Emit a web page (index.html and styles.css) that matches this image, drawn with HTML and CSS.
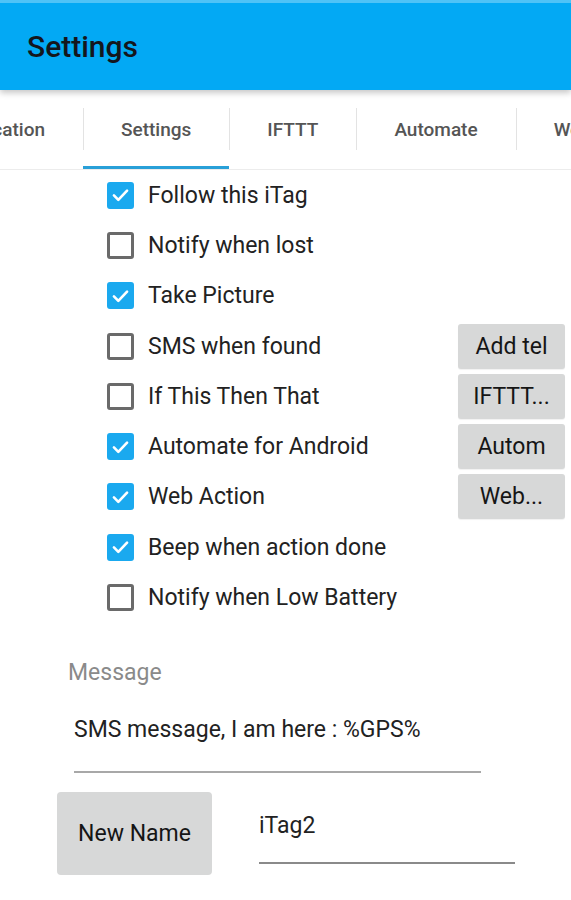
FILE: index.html
```html
<!DOCTYPE html>
<html lang="en">
<head>
<meta charset="utf-8">
<title>Settings</title>
<link rel="stylesheet" href="styles.css">
</head>
<body>
<header class="appbar">
  <h1 class="appbar-title">Settings</h1>
</header>
<nav class="tabbar">
  <div class="tab-clip"><div class="tab">Notification</div></div>
  <div class="tab active">Settings</div>
  <div class="tab">IFTTT</div>
  <div class="tab">Automate</div>
  <div class="tab">Web</div>
</nav>
<main class="content">
  <ul class="options">
    <li class="option"><span class="check on"><svg viewBox="0 0 24 24"><path d="M4.5 12.5l5 5L19.5 7"/></svg></span><span class="label">Follow this iTag</span></li>
    <li class="option"><span class="check"></span><span class="label">Notify when lost</span></li>
    <li class="option"><span class="check on"><svg viewBox="0 0 24 24"><path d="M4.5 12.5l5 5L19.5 7"/></svg></span><span class="label">Take Picture</span></li>
    <li class="option"><span class="check"></span><span class="label">SMS when found</span><button class="side-btn">Add tel</button></li>
    <li class="option"><span class="check"></span><span class="label">If This Then That</span><button class="side-btn">IFTTT...</button></li>
    <li class="option"><span class="check on"><svg viewBox="0 0 24 24"><path d="M4.5 12.5l5 5L19.5 7"/></svg></span><span class="label">Automate for Android</span><button class="side-btn">Autom</button></li>
    <li class="option"><span class="check on"><svg viewBox="0 0 24 24"><path d="M4.5 12.5l5 5L19.5 7"/></svg></span><span class="label">Web Action</span><button class="side-btn">Web...</button></li>
    <li class="option"><span class="check on"><svg viewBox="0 0 24 24"><path d="M4.5 12.5l5 5L19.5 7"/></svg></span><span class="label">Beep when action done</span></li>
    <li class="option"><span class="check"></span><span class="label">Notify when Low Battery</span></li>
  </ul>
  <section class="message">
    <div class="message-label">Message</div>
    <div class="message-field">SMS message, I am here : %GPS%</div>
  </section>
  <section class="rename">
    <button class="rename-btn">New Name</button>
    <div class="rename-field">iTag2</div>
  </section>
</main>
</body>
</html>
```
FILE: styles.css
```css
* { box-sizing: border-box; }
html, body { margin: 0; padding: 0; }
body {
  width: 571px;
  height: 900px;
  overflow: hidden;
  background: #fff;
  font-family: Roboto, "Liberation Sans", Arial, sans-serif;
  color: #222;
}
.appbar {
  height: 90px;
  background: #03a9f4;
  border-top: 3px solid #4fc3f7;
  display: flex;
  align-items: center;
  padding-left: 27px;
  box-shadow: 0 3px 6px rgba(0,0,0,0.22);
  position: relative;
  z-index: 2;
}
.appbar-title {
  margin: 0;
  font-size: 30px;
  font-weight: 500;
  color: #14161c;
}
.tabbar {
  height: 80px;
  display: flex;
  overflow: hidden;
  border-bottom: 1px solid #ececec;
  background: #fff;
}
.tab-clip {
  width: 83px;
  flex-shrink: 0;
  display: flex;
  justify-content: flex-end;
  overflow: hidden;
}
.tab {
  flex-shrink: 0;
  height: 79px;
  padding: 0 38px;
  display: flex;
  align-items: center;
  justify-content: center;
  font-size: 19px;
  font-weight: 500;
  color: #555;
  position: relative;
}
.tab::before {
  content: "";
  position: absolute;
  left: 0;
  top: 18px;
  height: 42px;
  width: 1px;
  background: #e3e3e3;
}
.tab-clip .tab::before { display: none; }
.tab.active::after {
  content: "";
  position: absolute;
  left: 0;
  right: 0;
  bottom: 0;
  height: 3px;
  background: #29a0d8;
}
.content { display: flex; flex-direction: column; }
.options {
  list-style: none;
  margin: 0;
  padding: 0;
}
.option {
  height: 50.3px;
  display: flex;
  align-items: center;
  padding-left: 107px;
  padding-right: 6px;
}
.check {
  width: 27px;
  height: 27px;
  border: 3px solid #6a6a6a;
  border-radius: 3px;
  flex-shrink: 0;
  display: flex;
  align-items: center;
  justify-content: center;
}
.check.on {
  background: #1aa9ef;
  border-color: #1aa9ef;
}
.check svg {
  width: 24px;
  height: 24px;
  fill: none;
  stroke: #fff;
  stroke-width: 3;
  stroke-linecap: round;
  stroke-linejoin: round;
}
.label {
  margin-left: 14px;
  font-size: 23px;
  color: #222;
  flex: 1;
}
.side-btn {
  width: 107px;
  height: 45px;
  border: none;
  border-radius: 3px;
  background: #d7d8d8;
  font-family: inherit;
  font-size: 23px;
  color: #151515;
  padding: 0;
  box-shadow: 0 1px 1px rgba(0,0,0,0.06);
}
.message {
  padding-top: 36px;
}
.message-label {
  margin-left: 68px;
  font-size: 23px;
  line-height: 27px;
  color: #8a8a8a;
}
.message-field {
  margin-left: 74px;
  width: 407px;
  margin-top: 30px;
  font-size: 23px;
  line-height: 27px;
  color: #222;
  padding-bottom: 28px;
  border-bottom: 2px solid #a8a8a8;
}
.rename {
  display: flex;
  align-items: flex-start;
  margin-top: 19px;
  padding-left: 57px;
}
.rename-btn {
  width: 155px;
  height: 83px;
  border: none;
  border-radius: 4px;
  background: #d7d8d8;
  font-family: inherit;
  font-size: 23px;
  color: #151515;
  padding: 0;
}
.rename-field {
  margin-left: 47px;
  width: 256px;
  padding-top: 20px;
  padding-bottom: 23px;
  font-size: 23px;
  line-height: 27px;
  color: #222;
  border-bottom: 2px solid #8a8a8a;
}
```
